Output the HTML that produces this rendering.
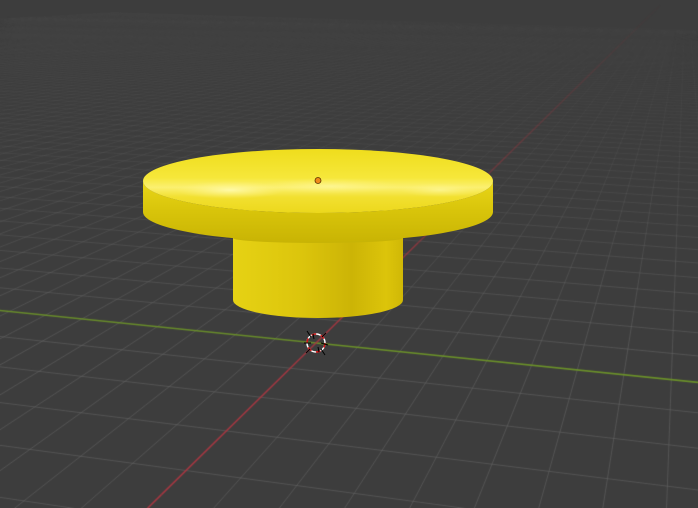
<!DOCTYPE html>
<html><head><meta charset="utf-8">
<style>
html,body{margin:0;padding:0;background:#3d3d3d;width:698px;height:508px;overflow:hidden}
#c{position:absolute;left:0;top:0}
svg{position:absolute;left:0;top:0}
</style></head><body>
<canvas id="c" width="698" height="508"></canvas>
<svg width="698" height="508" viewBox="0 0 698 508">
<defs>
<linearGradient id="top" x1="0" y1="0" x2="0" y2="1">
<stop offset="0" stop-color="#efdd1c"/>
<stop offset="0.45" stop-color="#f6e73a"/>
<stop offset="0.6" stop-color="#fbf070"/>
<stop offset="0.75" stop-color="#f2e030"/>
<stop offset="1" stop-color="#ecd81c"/>
</linearGradient>
<linearGradient id="rim" x1="0" y1="0" x2="0" y2="1">
<stop offset="0" stop-color="#e9d618"/>
<stop offset="0.5" stop-color="#d8c40a"/>
<stop offset="1" stop-color="#c9b404"/>
</linearGradient>
<linearGradient id="stem" x1="0" y1="0" x2="1" y2="0">
<stop offset="0" stop-color="#e6d214"/>
<stop offset="0.4" stop-color="#dcc50c"/>
<stop offset="0.7" stop-color="#ccb406"/>
<stop offset="0.9" stop-color="#dcc40a"/>
<stop offset="1" stop-color="#d0b806"/>
</linearGradient>
<radialGradient id="hl" cx="0.5" cy="0.5" r="0.5">
<stop offset="0" stop-color="#fffbb0" stop-opacity="0.9"/>
<stop offset="1" stop-color="#fff280" stop-opacity="0"/>
</radialGradient>
</defs>
<path d="M233,236 L233,300 A85,18 0 0,0 403,300 L403,236 Z" fill="url(#stem)"/>
<path d="M233,234 L403,234 L403,238 A85,5 0 0,1 233,238 Z" fill="#c8b406"/>
<path d="M143,181 L143,212 A175,30 0 0,0 493,212 L493,181 A175,32 0 0,1 143,181 Z" fill="url(#rim)"/>
<ellipse cx="318" cy="181" rx="175" ry="32" fill="url(#top)"/>
<ellipse cx="230" cy="190" rx="55" ry="9" fill="url(#hl)"/>
<ellipse cx="330" cy="186" rx="70" ry="8" fill="url(#hl)" opacity="0.6"/>
<ellipse cx="440" cy="190" rx="40" ry="7" fill="url(#hl)" opacity="0.6"/>
<circle cx="318" cy="180.5" r="3" fill="#f08a1a" stroke="#5a3000" stroke-width="0.8"/>
<g transform="translate(316,343)">
<circle r="9" fill="none" stroke="#fff" stroke-width="1.5"/>
<circle r="9" fill="none" stroke="#d01010" stroke-width="1.5" stroke-dasharray="4.7 4.7"/>
<g stroke="#000" stroke-width="1">
<line x1="-5" y1="-6" x2="-9" y2="-12"/><line x1="5" y1="6" x2="9" y2="12"/>
<line x1="-12" y1="0" x2="-5" y2="0"/><line x1="5" y1="0" x2="12" y2="2"/>
<line x1="-3" y1="-9" x2="-2" y2="-4"/><line x1="2" y1="4" x2="3" y2="9"/>
<line x1="6" y1="-6" x2="10" y2="-10"/><line x1="-6" y1="6" x2="-10" y2="10"/>
</g>
</g>
</svg>
<script>
var c=document.getElementById('c').getContext('2d');
c.fillStyle='#3d3d3d';c.fillRect(0,0,698,508);
var O=[316,343],Vx=[-4156,-118],Vy=[686,-20],a=0.0092,b=0.065;
function P(u,v){var z=1+a*u+b*v;return [(O[0]+a*u*Vx[0]+b*v*Vy[0])/z,(O[1]+a*u*Vx[1]+b*v*Vy[1])/z,z];}
function seg(u0,v0,u1,v1,col,base,minz){
 var n=60;
 for(var i=0;i<n;i++){
  var t0=i/n,t1=(i+1)/n;
  var p=P(u0+(u1-u0)*t0,v0+(v1-v0)*t0),q=P(u0+(u1-u0)*t1,v0+(v1-v0)*t1);
  if(p[2]<minz||q[2]<minz)continue;
  var z=(p[2]+q[2])/2;
  var al=Math.min(base,base/Math.pow(z,1.3));
  c.strokeStyle='rgba('+col+','+al+')';
  c.beginPath();c.moveTo(p[0],p[1]);c.lineTo(q[0],q[1]);c.stroke();
 }
}
c.lineWidth=1;
for(var u=-100;u<=100;u++){ if(u==0)continue; seg(u,-8,u,100,'100,100,100',0.6,0.2);}
for(var v=-8;v<=100;v++){ if(v==0)continue; seg(-100,v,100,v,'100,100,100',0.6,0.2);}
c.lineWidth=1.5;
seg(-300,0,300,0,'110,150,40',0.95,0.05);
seg(0,-8,0,200,'170,55,65',0.95,0.05);
</script>
</body></html>
